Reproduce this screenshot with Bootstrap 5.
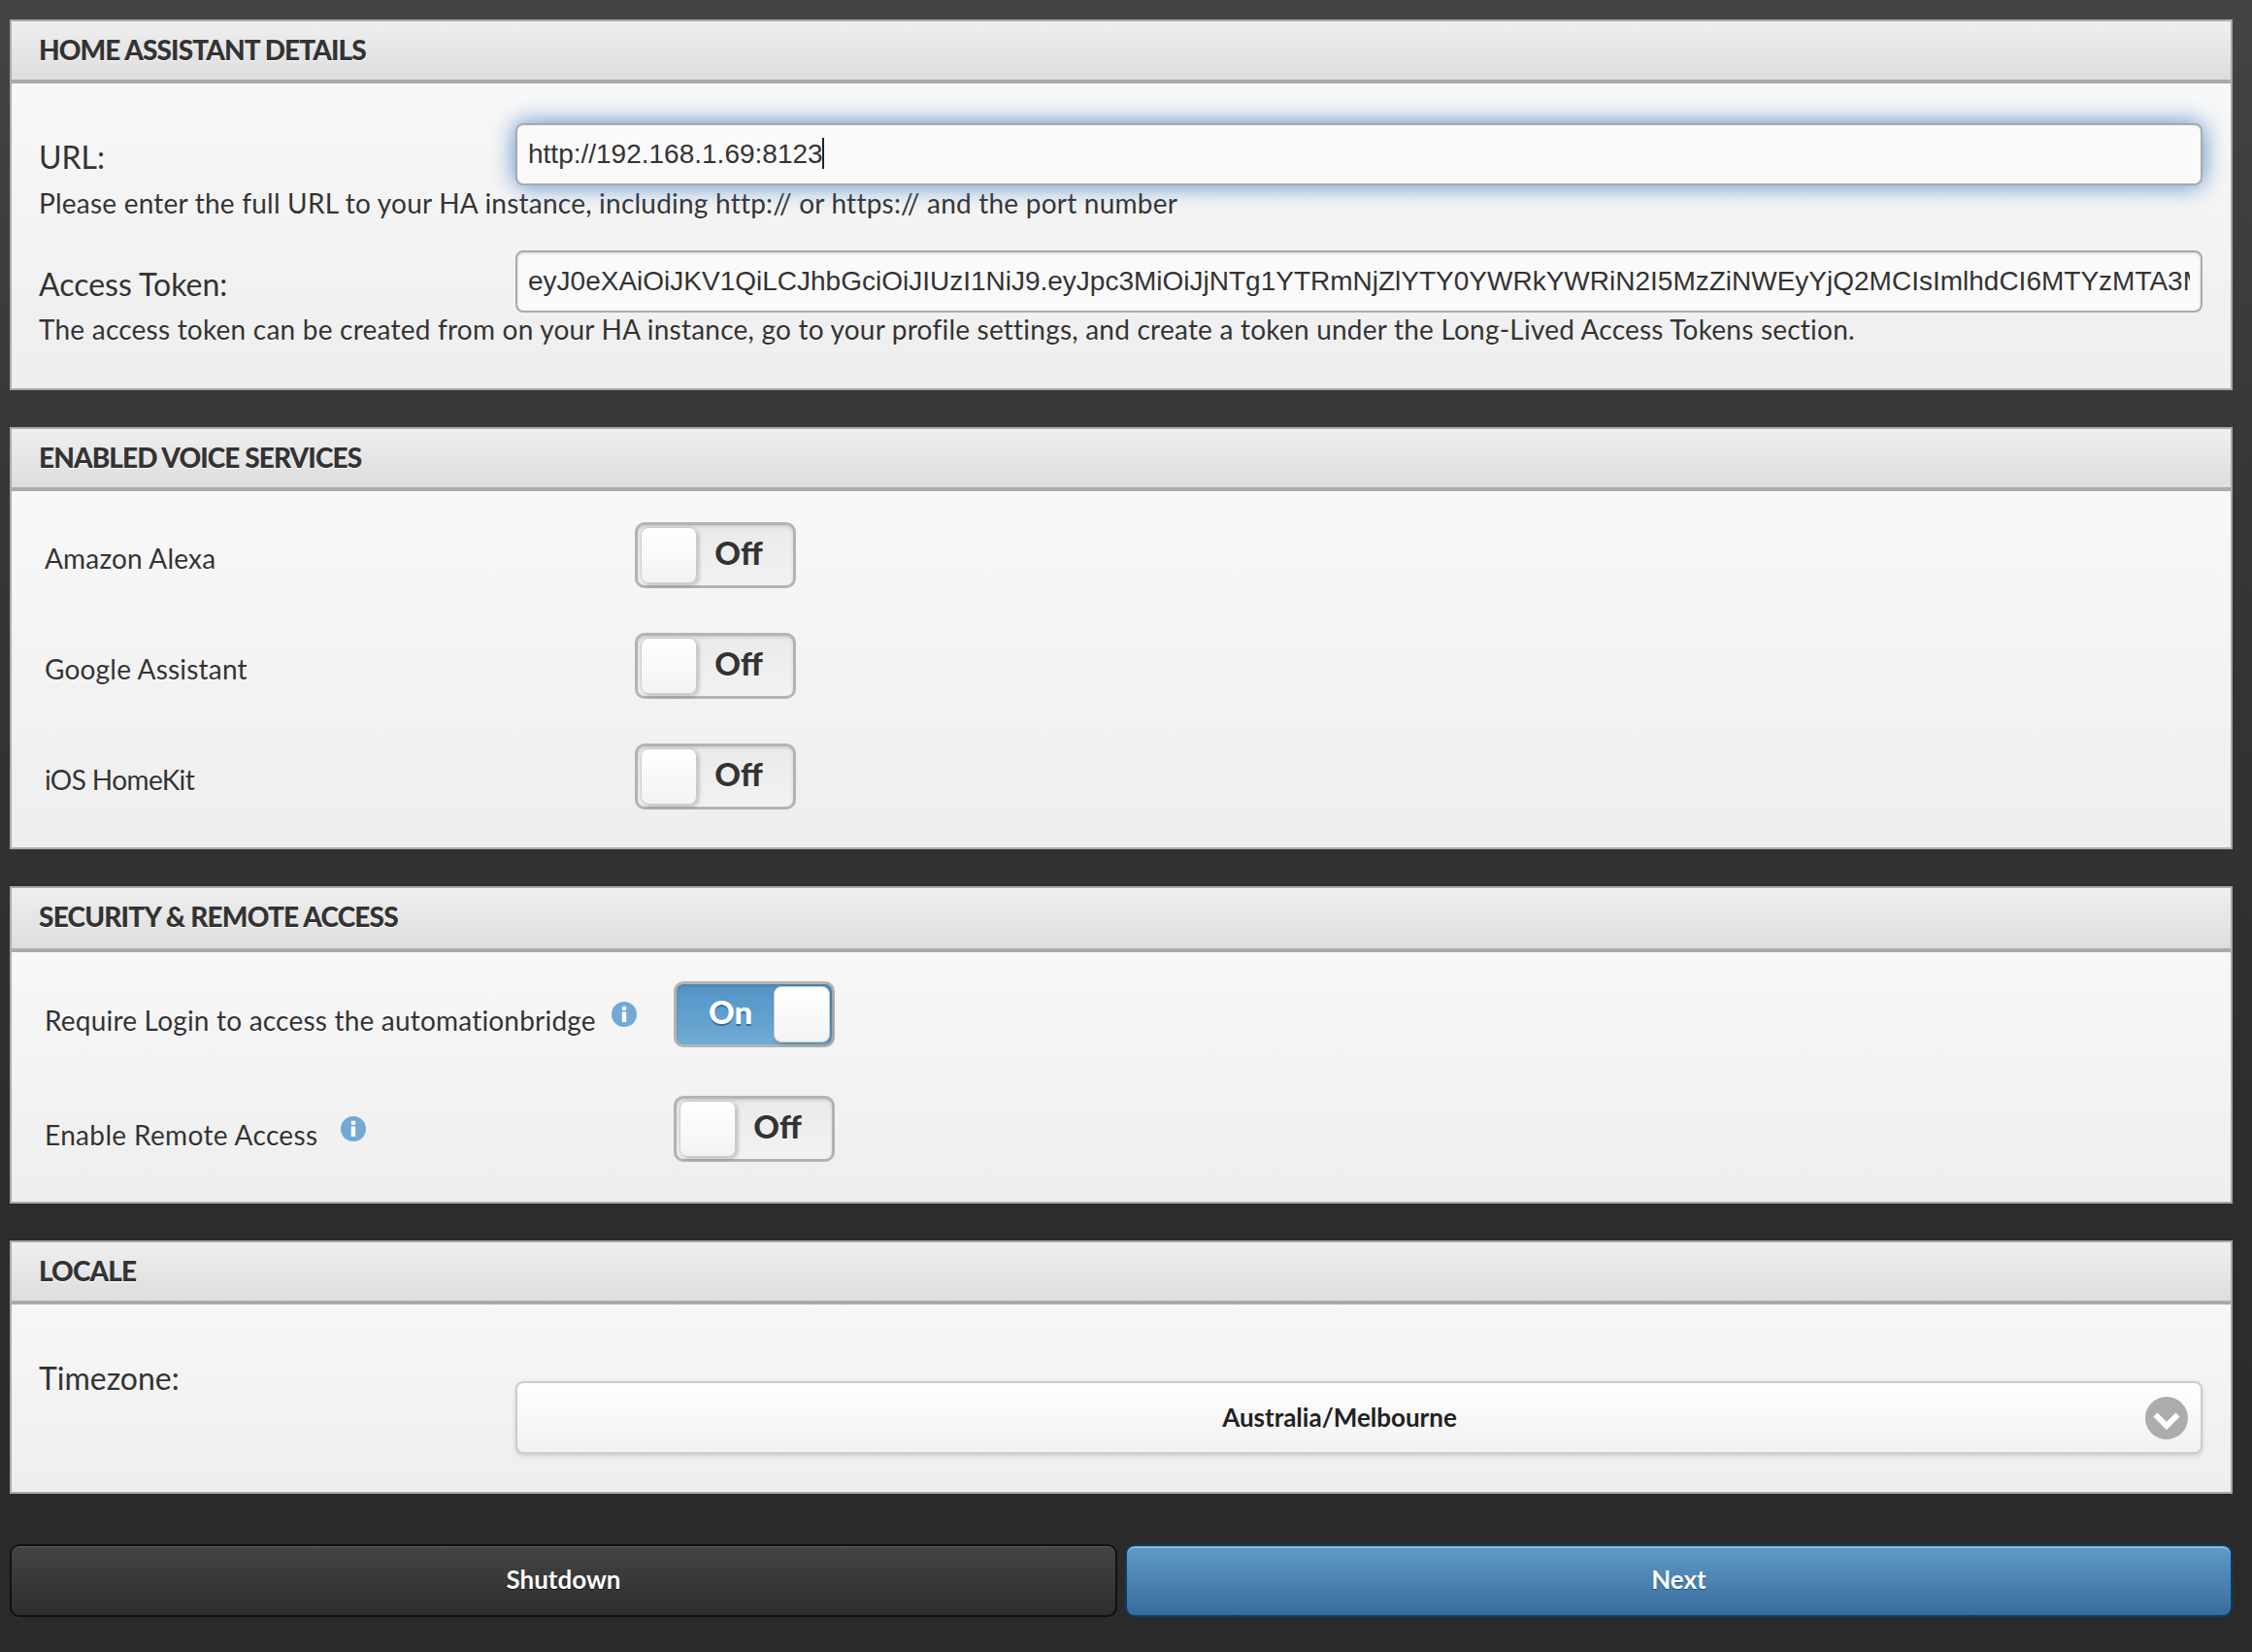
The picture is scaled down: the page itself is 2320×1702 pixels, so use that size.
<!DOCTYPE html>
<html lang="en">
<head>
<meta charset="utf-8">
<title>Home Assistant Details</title>
<link href="https://cdn.jsdelivr.net/npm/bootstrap@5.3.0/dist/css/bootstrap.min.css" rel="stylesheet">
<style>
html,body{height:100%}
body{margin:0;padding:20px 20px 35px 10px;background:linear-gradient(#444,#363636 30%,#2d2d2d 70%,#2a2a2a);color:#333;font-family:"Lato","Liberation Sans",sans-serif;min-height:1702px;overflow:hidden}
.ab-panel{border:2px solid #aaa;border-radius:0;background:linear-gradient(#fafafa,#eee);margin-bottom:38px}
.ab-panel .card-header{height:64px;border-radius:0;border:0;border-bottom:4px solid #aaa;background:linear-gradient(#efefef,#ddd);padding:0 28px;font-size:28px;font-weight:900;line-height:58px;text-transform:uppercase;text-shadow:0 1px 0 #fff;color:#333;letter-spacing:-.9px}
.ab-panel .ab-tall{height:66px;line-height:59px;letter-spacing:-.8px}
.ab-panel .ab-creds{padding:41px 29px 44px 28px}
.ab-lbl{width:491px;flex:none;font-size:32px;line-height:60px;height:64px;padding-top:5px}
.ab-input{height:64px;border:2px solid #aaa;border-radius:8px;background:#fafafa;color:#333;font:28px/1.2 "Liberation Sans",Arial,sans-serif;padding:0 11px;box-shadow:inset 0 1px 3px rgba(0,0,0,.15)}
.ab-input.is-on,.ab-input.is-on:focus{background:#fafafa;box-shadow:0 0 24px #4f88c9;border-color:#aaa}
.ab-caret{position:absolute;left:316px;top:15px;width:1.5px;height:32px;background:#222}
.ab-help{font-size:28px;line-height:34px;letter-spacing:.22px;text-shadow:0 1px 0 #fff;white-space:nowrap}
.ab-gap{margin-bottom:33px;padding-top:1px;margin-top:0;height:34px}
.ab-panel .ab-list{display:flex;flex-direction:column;padding-left:34px;padding-right:0}
.ab-panel .ab-voice{padding-top:32px;padding-bottom:39px;gap:46px}
.ab-panel .ab-sec{padding-top:30px;padding-bottom:41px;gap:50px}
.ab-name{width:608px;height:68px;flex:none;font-size:28px;padding-top:3px;letter-spacing:.2px;line-height:68px;text-shadow:0 1px 0 #fff;white-space:nowrap}
.ab-sec .ab-name{width:648px;display:flex;align-items:flex-start;padding-top:6px}
.ab-wide{letter-spacing:.35px}
.ab-tight{letter-spacing:-.6px}
.ab-info{flex:none;width:26px;height:26px;margin-top:15px}
.ab-switch{width:166px;height:68px;border:3px solid #b3b3b3;border-radius:10px;display:flex;align-items:center;flex:none;padding:3px;font:900 33px/1 "Lato","Liberation Sans",sans-serif;background:linear-gradient(#eaeaea,#f2f2f2);color:#333;box-shadow:inset 0 2px 3px rgba(0,0,0,.12)}
.ab-knob{width:58px;height:58px;flex:none;border-radius:8px;background:linear-gradient(#fff,#f3f3f3);border:1px solid #ccc;box-shadow:2px 2px 4px rgba(0,0,0,.22)}
.ab-txt{flex:1;text-align:center;padding:0 10px 6px 0;text-shadow:0 1px 0 #fff}
.ab-switch.on{background:linear-gradient(#5393c5,#6facd5);color:#fff;padding-right:2px}
.ab-switch.on .ab-txt{padding:0 0 6px 8px;text-shadow:0 2px 0 #2f6fa8}
.ab-panel .ab-locale{padding:79px 29px 39px 28px}
.ab-tz-lbl{width:491px;flex:none;font-size:32px;line-height:40px;margin-top:-23px}
.ab-select{position:relative;display:block;width:100%;height:75px;border:2px solid #ccc;border-radius:8px;background:linear-gradient(#fff,#f1f1f1);font:700 26px/1 "Lato","Liberation Sans",sans-serif;color:#222;padding:0 40px 2px 0;box-shadow:0 2px 4px rgba(0,0,0,.15);text-shadow:0 1px 0 #fff}
.ab-chev{position:absolute;right:13px;top:14px;width:44px;height:44px}
.ab-foot{margin-top:52px}
.ab-btn{flex:1 1 0;height:75px;border-radius:10px;color:#fff;font:700 26px/1 "Lato","Liberation Sans",sans-serif;border:2px solid #111;padding-bottom:9px;background:linear-gradient(#444,#2d2d2d);box-shadow:inset 0 1px 0 rgba(255,255,255,.15);text-shadow:0 1px 1px #111}
.ab-btn.next{border-color:#044062;background:linear-gradient(#5f9cc5,#396b9e);box-shadow:inset 0 2px 0 rgba(255,255,255,.3);text-shadow:0 1px 1px #1c4a75}
.ab-btn:hover{color:#fff}
</style>
</head>
<body>
<div class="card ab-panel">
  <div class="card-header">Home Assistant Details</div>
  <div class="card-body ab-creds">
    <div class="d-flex">
      <div class="ab-lbl">URL:</div>
      <div class="flex-grow-1 position-relative">
        <input class="form-control ab-input is-on" type="text" value="http://192.168.1.69:8123">
        <span class="ab-caret"></span>
      </div>
    </div>
    <div class="ab-help ab-gap">Please enter the full URL to your HA instance, including http:// or https:// and the port number</div>
    <div class="d-flex">
      <div class="ab-lbl">Access Token:</div>
      <div class="flex-grow-1">
        <input class="form-control ab-input" type="text" value="eyJ0eXAiOiJKV1QiLCJhbGciOiJIUzI1NiJ9.eyJpc3MiOiJjNTg1YTRmNjZlYTY0YWRkYWRiN2I5MzZiNWEyYjQ2MCIsImlhdCI6MTYzMTA3MTk2MiwiZXhwIjoxOTQ2NDMxOTYyfQ">
      </div>
    </div>
    <div class="ab-help">The access token can be created from on your HA instance, go to your profile settings, and create a token under the Long-Lived Access Tokens section.</div>
  </div>
</div>

<div class="card ab-panel">
  <div class="card-header">Enabled Voice Services</div>
  <div class="card-body ab-list ab-voice">
    <div class="d-flex"><div class="ab-name">Amazon Alexa</div><div class="ab-switch"><span class="ab-knob"></span><span class="ab-txt">Off</span></div></div>
    <div class="d-flex"><div class="ab-name">Google Assistant</div><div class="ab-switch"><span class="ab-knob"></span><span class="ab-txt">Off</span></div></div>
    <div class="d-flex"><div class="ab-name ab-tight">iOS HomeKit</div><div class="ab-switch"><span class="ab-knob"></span><span class="ab-txt">Off</span></div></div>
  </div>
</div>

<div class="card ab-panel">
  <div class="card-header ab-tall">Security &amp; Remote Access</div>
  <div class="card-body ab-list ab-sec">
    <div class="d-flex"><div class="ab-name"><span>Require Login to access the automationbridge</span>
      <svg class="ab-info ms-3" viewBox="0 0 26 26"><circle cx="13" cy="13" r="13" fill="#72a9d5"/><circle cx="13" cy="6.8" r="2.4" fill="#fff"/><rect x="10.8" y="10.5" width="4.4" height="10.5" fill="#fff"/></svg></div>
      <div class="ab-switch on"><span class="ab-txt">On</span><span class="ab-knob"></span></div></div>
    <div class="d-flex"><div class="ab-name ab-wide"><span>Enable Remote Access</span>
      <svg class="ab-info ms-4" viewBox="0 0 26 26"><circle cx="13" cy="13" r="13" fill="#72a9d5"/><circle cx="13" cy="6.8" r="2.4" fill="#fff"/><rect x="10.8" y="10.5" width="4.4" height="10.5" fill="#fff"/></svg></div>
      <div class="ab-switch"><span class="ab-knob"></span><span class="ab-txt">Off</span></div></div>
  </div>
</div>

<div class="card ab-panel mb-0">
  <div class="card-header">Locale</div>
  <div class="card-body ab-locale d-flex">
    <div class="ab-tz-lbl">Timezone:</div>
    <button type="button" class="btn ab-select">Australia/Melbourne
      <svg class="ab-chev" viewBox="0 0 44 44"><circle cx="22" cy="22" r="22" fill="#acacac"/><path d="M10.5 18.5L22 30L33.5 18.5" fill="none" stroke="#fff" stroke-width="6"/></svg>
    </button>
  </div>
</div>

<div class="d-flex gap-2 ab-foot">
  <button type="button" class="btn ab-btn">Shutdown</button>
  <button type="button" class="btn ab-btn next">Next</button>
</div>
<script src="https://cdn.jsdelivr.net/npm/bootstrap@5.3.0/dist/js/bootstrap.bundle.min.js"></script>
</body>
</html>
